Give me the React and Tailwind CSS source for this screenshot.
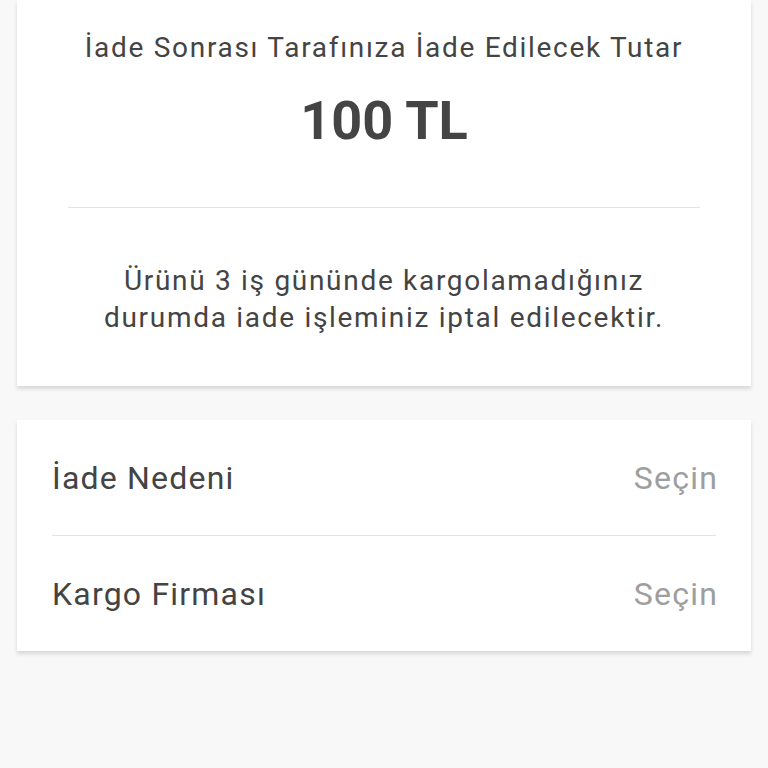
export default function App() {
  return (
    <div
      className="w-[768px] h-[768px] overflow-hidden bg-[#f8f8f8]"
      style={{ fontFamily: 'Roboto, "Noto Sans", sans-serif' }}
    >
      <div className="mx-[17px] bg-white shadow-[0_3px_4px_rgba(0,0,0,0.13)] pt-[30px] pb-[50px] text-center text-[#444]">
        <div className="text-[28px] leading-[36px] tracking-[1.7px]">İade Sonrası Tarafınıza İade Edilecek Tutar</div>
        <div className="mt-[28px] text-[54px] leading-[54px] font-bold">100 TL</div>
        <div className="mx-[51px] mt-[59px] h-px bg-[#e2e2e2]" />
        <div className="mt-[54px] text-[28px] leading-[37px] tracking-[1.7px]">
          Ürünü 3 iş gününde kargolamadığınız
          <br />
          durumda iade işleminiz iptal edilecektir.
        </div>
      </div>
      <div className="mx-[17px] mt-[34px] bg-white shadow-[0_3px_4px_rgba(0,0,0,0.13)] text-[32px] tracking-[1.2px]">
        <div className="flex items-center justify-between h-[115px] pl-[35px] pr-[33px]">
          <span className="text-[#444]">İade Nedeni</span>
          <span className="text-[#9e9e9e]">Seçin</span>
        </div>
        <div className="mx-[35px] h-px bg-[#e2e2e2]" />
        <div className="flex items-center justify-between h-[115px] pl-[35px] pr-[33px]">
          <span className="text-[#444]">Kargo Firması</span>
          <span className="text-[#9e9e9e]">Seçin</span>
        </div>
      </div>
    </div>
  );
}
